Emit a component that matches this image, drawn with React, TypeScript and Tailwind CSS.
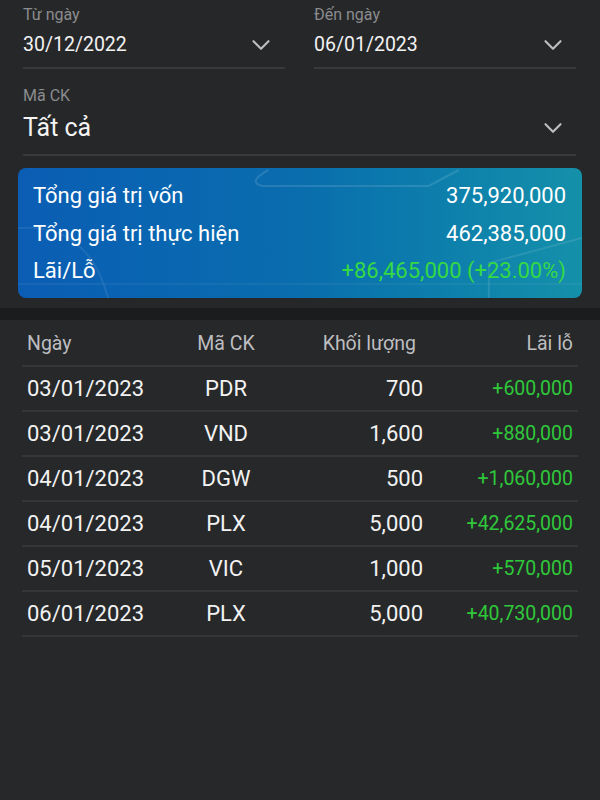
import { ChevronDown } from "lucide-react";

const rows = [
  { date: "03/01/2023", code: "PDR", vol: "700", pl: "+600,000" },
  { date: "03/01/2023", code: "VND", vol: "1,600", pl: "+880,000" },
  { date: "04/01/2023", code: "DGW", vol: "500", pl: "+1,060,000" },
  { date: "04/01/2023", code: "PLX", vol: "5,000", pl: "+42,625,000" },
  { date: "05/01/2023", code: "VIC", vol: "1,000", pl: "+570,000" },
  { date: "06/01/2023", code: "PLX", vol: "5,000", pl: "+40,730,000" },
];

function DateField({ label, value, pr }: { label: string; value: string; pr: string }) {
  return (
    <div className="flex-1 border-b-2 border-[#38393c] pb-[10px]">
      <div className="h-5 text-[16px] leading-5 text-[#8b8c8e]">{label}</div>
      <div className={`mt-2 flex h-6 items-center justify-between ${pr}`}>
        <span className="text-[19.5px] leading-6 text-[#f2f2f2]">{value}</span>
        <ChevronDown size={30} strokeWidth={1.7} className="text-[#bdbec0]" />
      </div>
    </div>
  );
}

export default function App() {
  return (
    <div
      className="flex min-h-[800px] w-[600px] flex-col bg-[#27282a]"
      style={{ fontFamily: "Roboto, 'Liberation Sans', sans-serif" }}
    >
      <div className="bg-[#262729] pl-[23px] pr-[24px] pt-[5px]">
        <div className="flex gap-[29px]">
          <DateField label="Từ ngày" value="30/12/2022" pr="pr-[9px]" />
          <DateField label="Đến ngày" value="06/01/2023" pr="pr-[8px]" />
        </div>

        <div className="mt-[17px] border-b-2 border-[#38393c] pb-[12px]">
          <div className="h-5 text-[16px] leading-5 text-[#8b8c8e]">Mã CK</div>
          <div className="mt-2 flex h-7 items-center justify-between pr-[8px]">
            <span className="text-[25px] leading-7 text-[#f4f4f4]">Tất cả</span>
            <ChevronDown size={30} strokeWidth={1.7} className="text-[#bdbec0]" />
          </div>
        </div>
      </div>

      <div className="bg-[#262729] px-[18px] pb-[10px] pt-[12px]">
        <div className="relative h-[130px] overflow-hidden rounded-[8px] bg-gradient-to-r from-[#0b5db4] via-[#0a6dad] to-[#1590aa] pl-[15px] pr-[16px] pt-[9px]">
          <svg
            className="absolute inset-0 h-full w-full"
            viewBox="0 0 563 130"
            fill="none"
            preserveAspectRatio="none"
          >
            <path d="M250 2 Q228 14 244 18 L410 18 L440 2" stroke="#ffffff" strokeOpacity="0.12" strokeWidth="2" />
            <path d="M0 60 Q70 55 90 130" stroke="#ffffff" strokeOpacity="0.08" strokeWidth="2" />
            <path d="M563 70 L470 95 L470 130" stroke="#ffffff" strokeOpacity="0.1" strokeWidth="2" />
            <path d="M0 116 L563 116" stroke="#ffffff" strokeOpacity="0.05" strokeWidth="2" />
          </svg>
          <div className="relative flex h-[37.5px] items-center justify-between text-[22px] text-white">
            <span>Tổng giá trị vốn</span>
            <span>375,920,000</span>
          </div>
          <div className="relative flex h-[37.5px] items-center justify-between text-[22px] text-white">
            <span>Tổng giá trị thực hiện</span>
            <span>462,385,000</span>
          </div>
          <div className="relative flex h-[37.5px] items-center justify-between text-[22px] text-white">
            <span>Lãi/Lỗ</span>
            <span className="text-[#35d944]">+86,465,000 (+23.00%)</span>
          </div>
        </div>
      </div>

      <div className="h-[12px] bg-[#1b1c1e]" />

      <div className="mx-[22px]">
        <div className="flex h-[47px] items-center border-b-2 border-[#353639] px-[5px] pt-[2px] text-[19.5px] text-[#bdbec0]">
          <div className="w-[140px]">Ngày</div>
          <div className="w-[118px] text-center">Mã CK</div>
          <div className="w-[138px] pr-[7px] text-right">Khối lượng</div>
          <div className="flex-1 text-right">Lãi lỗ</div>
        </div>
        {rows.map((r, i) => (
          <div
            key={i}
            className="flex h-[45px] items-center border-b-2 border-[#353639] px-[5px] text-[22px] text-[#f2f2f2]"
          >
            <div className="w-[140px]">{r.date}</div>
            <div className="w-[118px] text-center">{r.code}</div>
            <div className="w-[138px] text-right">{r.vol}</div>
            <div className="flex-1 text-right text-[19.5px] text-[#2fc83a]">{r.pl}</div>
          </div>
        ))}
      </div>
    </div>
  );
}
